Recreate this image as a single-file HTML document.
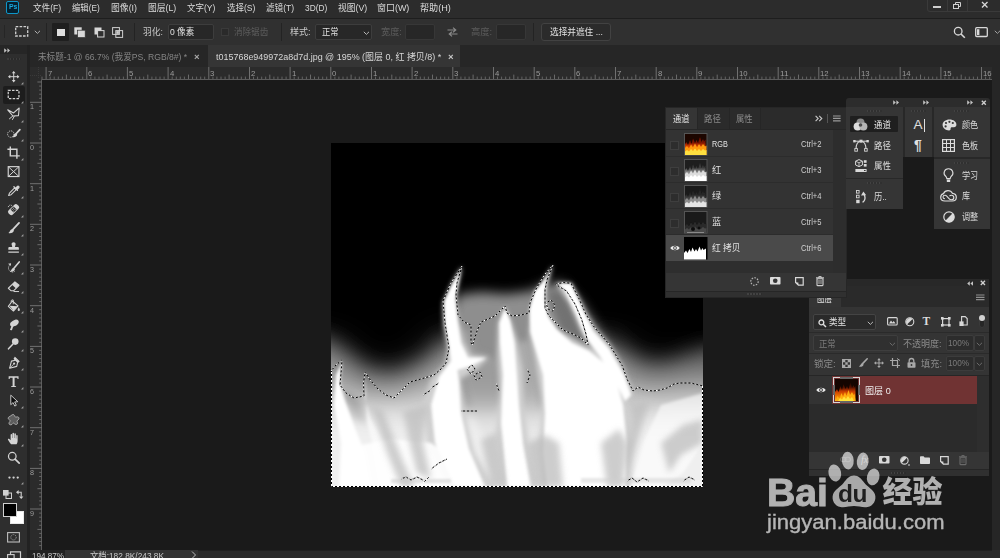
<!DOCTYPE html>
<html lang="zh-CN">
<head>
<meta charset="utf-8">
<title>Photoshop</title>
<style>
*{box-sizing:border-box;margin:0;padding:0}
html,body{width:1000px;height:558px;overflow:hidden;background:#1a1a1a}
body{position:relative;font-family:"Liberation Sans","Noto Sans CJK SC",sans-serif;font-size:9.5px;color:#d6d6d6;line-height:1}
.a{position:absolute}
.t{position:absolute;white-space:pre;line-height:1;transform-origin:0 50%}
svg{position:absolute;overflow:visible}
#menubar{left:0;top:0;width:1000px;height:18px;background:#2c2c2c}
#menusep{left:0;top:18px;width:1000px;height:1px;background:#1e1e1e}
#optbar{left:0;top:19px;width:1000px;height:26px;background:#303030}
#tabbar{left:0;top:45px;width:1000px;height:22px;background:#262626}
#toolbar{left:0;top:54px;width:27px;height:504px;background:#2e2e2e}
#gap{left:27px;top:45px;width:3px;height:513px;background:#222}
#hruler{left:30px;top:67px;width:962px;height:12px;background:#2b2b2b}
#vruler{left:30px;top:79px;width:12px;height:471px;background:#2b2b2b}
#vscroll{left:992px;top:67px;width:8px;height:491px;background:#262626}
#status{left:30px;top:550px;width:970px;height:8px;background:#2c2c2c}
.sep{position:absolute;top:23px;width:1px;height:18px;background:#232323}
.inp{position:absolute;background:#272727;border:1px solid #3d3d3d;border-radius:2px}
</style>
</head>
<body>
<!-- top bars -->
<div class="a" id="menubar"></div>
<div class="a" id="menusep"></div>
<div class="a" id="optbar"></div>
<div class="a" id="tabbar"></div>
<div class="a" style="left:208px;top:45px;width:252px;height:22px;background:#353535"></div>
<!-- Ps logo -->
<div class="a" style="left:6px;top:1px;width:13px;height:12.500px;border:1.300px solid #0e96c8;border-radius:2px;background:#06202e"></div>
<span class="t" style="left:8.800px;top:3.400px;font-size:7.500px;font-weight:bold;color:#1aa8dc;transform:scaleX(.92)">Ps</span>
<!-- window controls -->
<div class="a" style="left:927px;top:0;width:74px;height:12px;border:1px solid #3a3a3a;border-top:none;border-radius:0 0 0 3px;background:#2c2c2c"></div>
<div class="a" style="left:947px;top:0;width:1px;height:11px;background:#3a3a3a"></div>
<div class="a" style="left:967px;top:0;width:1px;height:11px;background:#3a3a3a"></div>
<div class="a" style="left:933px;top:6px;width:8px;height:2px;background:#cfcfcf"></div>
<svg style="left:952px;top:1px" width="12" height="9" viewBox="0 0 12 9"><rect x="1.5" y="3.5" width="5" height="4" fill="none" stroke="#cfcfcf" stroke-width="1"/><path d="M3.5 3.5v-2h5v4h-2" fill="none" stroke="#cfcfcf" stroke-width="1"/></svg>
<svg style="left:981px;top:1px" width="8" height="8" viewBox="0 0 8 8"><path d="M1 1l5.5 5.5M6.5 1L1 6.5" stroke="#d8d8d8" stroke-width="1.3" fill="none"/></svg>
<!-- options bar content -->
<div class="a" style="left:3.5px;top:25px;width:1.5px;height:13px;background:#262626"></div>
<svg style="left:15px;top:25.5px" width="14" height="11" viewBox="0 0 14 11"><rect x="0.7" y="0.7" width="12" height="9.3" fill="none" stroke="#d0d0d0" stroke-width="1.3" stroke-dasharray="2.6 1.3"/></svg>
<svg style="left:33.5px;top:30px" width="7" height="5" viewBox="0 0 7 5"><path d="M0.8 0.8L3.4 3.4 6 0.8" fill="none" stroke="#b0b0b0" stroke-width="1"/></svg>
<div class="sep" style="left:45.5px"></div>
<div class="a" style="left:52px;top:23px;width:17px;height:18px;background:#1f1f1f;border-radius:1px"></div>
<div class="a" style="left:57px;top:28.6px;width:7.6px;height:7.6px;background:#dedede"></div>
<svg style="left:73.5px;top:27px" width="12" height="11" viewBox="0 0 12 11"><rect x="0.3" y="0.3" width="7.4" height="7.2" fill="#d8d8d8"/><rect x="3.6" y="3.2" width="7.6" height="7.4" fill="#d8d8d8" stroke="#303030" stroke-width=".7"/></svg>
<svg style="left:93.5px;top:27px" width="12" height="11" viewBox="0 0 12 11"><rect x="0.5" y="0.5" width="7" height="7" fill="#d8d8d8"/><rect x="3.6" y="3.6" width="6.4" height="6.4" fill="#303030" stroke="#d8d8d8" stroke-width="1"/></svg>
<svg style="left:112px;top:27px" width="12" height="11" viewBox="0 0 12 11"><rect x="0.6" y="0.6" width="6.8" height="6.8" fill="none" stroke="#d0d0d0" stroke-width="1"/><rect x="3.8" y="3.6" width="6.8" height="6.8" fill="none" stroke="#d0d0d0" stroke-width="1"/><rect x="4.3" y="4.1" width="2.6" height="2.8" fill="#d0d0d0"/></svg>
<div class="sep" style="left:133.5px"></div>
<div class="inp" style="left:167.5px;top:24px;width:46px;height:15.5px"></div>
<div class="a" style="left:221px;top:28px;width:8px;height:8px;background:#2a2a2a;border:1px solid #3a3a3a"></div>
<div class="sep" style="left:281px"></div>
<div class="inp" style="left:314.5px;top:24px;width:57px;height:16px"></div>
<svg style="left:362.5px;top:30.5px" width="7" height="5" viewBox="0 0 7 5"><path d="M0.8 0.8L3.4 3.4 6 0.8" fill="none" stroke="#b8b8b8" stroke-width="1"/></svg>
<div class="inp" style="left:405px;top:24px;width:29.5px;height:15.5px;border-color:#373737"></div>
<svg style="left:446.5px;top:27px" width="11" height="10" viewBox="0 0 11 10"><path d="M0.5 3h8M6 0.6L8.8 3 6 5.2M10.5 7h-8M5 4.8L2.2 7 5 9.4" fill="none" stroke="#8a8a8a" stroke-width="1.1"/></svg>
<div class="inp" style="left:495.5px;top:24px;width:30px;height:15.5px;border-color:#373737"></div>
<div class="sep" style="left:532.5px"></div>
<div class="a" style="left:541px;top:23px;width:70px;height:17.5px;background:#2b2b2b;border:1px solid #424242;border-radius:3px"></div>
<svg style="left:953px;top:26px" width="13" height="13" viewBox="0 0 13 13"><circle cx="5.2" cy="5.2" r="3.8" fill="none" stroke="#d8d8d8" stroke-width="1.3"/><path d="M8 8l3.8 3.8" stroke="#d8d8d8" stroke-width="1.6"/></svg>
<svg style="left:975px;top:27px" width="14" height="11" viewBox="0 0 14 11"><rect x="0.7" y="0.7" width="11.6" height="8.8" rx="1" fill="none" stroke="#d8d8d8" stroke-width="1.3"/><rect x="2" y="2.2" width="2.4" height="5.8" fill="#d8d8d8"/></svg>
<svg style="left:993.5px;top:30px" width="7" height="5" viewBox="0 0 7 5"><path d="M0.8 0.8L3.4 3.4 6 0.8" fill="none" stroke="#a0a0a0" stroke-width="1"/></svg>
<!-- tab close marks -->
<svg style="left:194px;top:54px" width="6" height="6" viewBox="0 0 6 6"><path d="M0.8 0.8l4 4M4.8 0.8l-4 4" stroke="#a8a8a8" stroke-width="1.1"/></svg>
<svg style="left:447.5px;top:54px" width="6" height="6" viewBox="0 0 6 6"><path d="M0.8 0.8l4 4M4.8 0.8l-4 4" stroke="#c8c8c8" stroke-width="1.1"/></svg>

<span class="t" style="left:33.1px;top:3.0px;font-size:9.5px;color:#dadada;transform:scaleX(0.902)">文件(F)</span>
<span class="t" style="left:72.3px;top:3.0px;font-size:9.5px;color:#dadada;transform:scaleX(0.875)">编辑(E)</span>
<span class="t" style="left:111.0px;top:3.0px;font-size:9.5px;color:#dadada;transform:scaleX(0.930)">图像(I)</span>
<span class="t" style="left:148.0px;top:3.0px;font-size:9.5px;color:#dadada;transform:scaleX(0.924)">图层(L)</span>
<span class="t" style="left:186.7px;top:3.0px;font-size:9.5px;color:#dadada;transform:scaleX(0.894)">文字(Y)</span>
<span class="t" style="left:226.7px;top:3.0px;font-size:9.5px;color:#dadada;transform:scaleX(0.894)">选择(S)</span>
<span class="t" style="left:265.9px;top:3.0px;font-size:9.5px;color:#dadada;transform:scaleX(0.902)">滤镜(T)</span>
<span class="t" style="left:304.8px;top:3.0px;font-size:9.5px;color:#dadada;transform:scaleX(0.876)">3D(D)</span>
<span class="t" style="left:337.5px;top:3.0px;font-size:9.5px;color:#dadada;transform:scaleX(0.922)">视图(V)</span>
<span class="t" style="left:377.3px;top:3.0px;font-size:9.5px;color:#dadada;transform:scaleX(0.942)">窗口(W)</span>
<span class="t" style="left:420.0px;top:3.0px;font-size:9.5px;color:#dadada;transform:scaleX(0.956)">帮助(H)</span>
<span class="t" style="left:142.6px;top:27.1px;font-size:9.5px;color:#c8c8c8;transform:scaleX(0.915)">羽化:</span>
<span class="t" style="left:169.8px;top:27.1px;font-size:9.5px;color:#e0e0e0;transform:scaleX(0.898)">0 像素</span>
<span class="t" style="left:233.7px;top:27.2px;font-size:9.5px;color:#5c5c5c;transform:scaleX(0.900)">消除锯齿</span>
<span class="t" style="left:290.4px;top:27.1px;font-size:9.5px;color:#c8c8c8;transform:scaleX(0.952)">样式:</span>
<span class="t" style="left:321.5px;top:27.2px;font-size:9.5px;color:#e0e0e0;transform:scaleX(0.868)">正常</span>
<span class="t" style="left:380.7px;top:27.2px;font-size:9.5px;color:#5c5c5c;transform:scaleX(0.961)">宽度:</span>
<span class="t" style="left:471.3px;top:27.2px;font-size:9.5px;color:#5c5c5c;transform:scaleX(0.975)">高度:</span>
<span class="t" style="left:549.6px;top:27.2px;font-size:9.5px;color:#e0e0e0;transform:scaleX(0.911)">选择并遮住 ...</span>
<span class="t" style="left:37.5px;top:51.9px;font-size:9.5px;color:#858585;transform:scaleX(0.905)">未标题-1 @ 66.7% (我爱PS, RGB/8#) *</span>
<span class="t" style="left:215.7px;top:51.9px;font-size:9.5px;color:#d8d8d8;transform:scaleX(0.943)">t015768e949972a8d7d.jpg @ 195% (图层 0, 红 拷贝/8) *</span>
<!-- rulers -->
<div class="a" id="hruler"></div><div class="a" id="vruler"></div><div class="a" id="vscroll"></div><div class="a" id="status"></div>
<div class="a" id="toolbar"></div><div class="a" id="gap"></div>
<svg style="left:0;top:0" width="1000" height="558" viewBox="0 0 1000 558">
<path d="M41.5 79.5H992M41.5 79.5V550" stroke="#5c5c5c" stroke-width="1" fill="none"/>
<path d="M46.1 67v12M86.8 67v12M127.4 67v12M168.1 67v12M208.8 67v12M249.5 67v12M290.1 67v12M330.8 67v12M371.5 67v12M412.1 67v12M452.8 67v12M493.5 67v12M534.2 67v12M574.8 67v12M615.5 67v12M656.2 67v12M696.8 67v12M737.5 67v12M778.2 67v12M818.8 67v12M859.5 67v12M900.2 67v12M940.9 67v12M981.5 67v12M30 102.3h12M30 143.0h12M30 183.7h12M30 224.3h12M30 265.0h12M30 305.7h12M30 346.4h12M30 387.0h12M30 427.7h12M30 468.4h12M30 509.0h12" stroke="#707070" stroke-width="1" fill="none"/>
<path d="M66.4 74.6v4.4M107.1 74.6v4.4M147.8 74.6v4.4M188.5 74.6v4.4M229.1 74.6v4.4M269.8 74.6v4.4M310.5 74.6v4.4M351.1 74.6v4.4M391.8 74.6v4.4M432.5 74.6v4.4M473.1 74.6v4.4M513.8 74.6v4.4M554.5 74.6v4.4M595.2 74.6v4.4M635.8 74.6v4.4M676.5 74.6v4.4M717.2 74.6v4.4M757.8 74.6v4.4M798.5 74.6v4.4M839.2 74.6v4.4M879.8 74.6v4.4M920.5 74.6v4.4M961.2 74.6v4.4M37.4 82.0h4.4M37.4 122.7h4.4M37.4 163.3h4.4M37.4 204.0h4.4M37.4 244.7h4.4M37.4 285.3h4.4M37.4 326.0h4.4M37.4 366.7h4.4M37.4 407.4h4.4M37.4 448.0h4.4M37.4 488.7h4.4M37.4 529.4h4.4" stroke="#6a6a6a" stroke-width="1" fill="none"/>
<path d="M42.0 76.6v2.4M50.2 76.6v2.4M54.2 76.6v2.4M58.3 76.6v2.4M62.4 76.6v2.4M70.5 76.6v2.4M74.6 76.6v2.4M78.6 76.6v2.4M82.7 76.6v2.4M90.8 76.6v2.4M94.9 76.6v2.4M99.0 76.6v2.4M103.0 76.6v2.4M111.2 76.6v2.4M115.2 76.6v2.4M119.3 76.6v2.4M123.4 76.6v2.4M131.5 76.6v2.4M135.6 76.6v2.4M139.7 76.6v2.4M143.7 76.6v2.4M151.9 76.6v2.4M155.9 76.6v2.4M160.0 76.6v2.4M164.1 76.6v2.4M172.2 76.6v2.4M176.3 76.6v2.4M180.3 76.6v2.4M184.4 76.6v2.4M192.5 76.6v2.4M196.6 76.6v2.4M200.7 76.6v2.4M204.7 76.6v2.4M212.9 76.6v2.4M216.9 76.6v2.4M221.0 76.6v2.4M225.1 76.6v2.4M233.2 76.6v2.4M237.3 76.6v2.4M241.3 76.6v2.4M245.4 76.6v2.4M253.5 76.6v2.4M257.6 76.6v2.4M261.7 76.6v2.4M265.7 76.6v2.4M273.9 76.6v2.4M277.9 76.6v2.4M282.0 76.6v2.4M286.1 76.6v2.4M294.2 76.6v2.4M298.3 76.6v2.4M302.3 76.6v2.4M306.4 76.6v2.4M314.5 76.6v2.4M318.6 76.6v2.4M322.7 76.6v2.4M326.7 76.6v2.4M334.9 76.6v2.4M338.9 76.6v2.4M343.0 76.6v2.4M347.1 76.6v2.4M355.2 76.6v2.4M359.3 76.6v2.4M363.3 76.6v2.4M367.4 76.6v2.4M375.5 76.6v2.4M379.6 76.6v2.4M383.7 76.6v2.4M387.7 76.6v2.4M395.9 76.6v2.4M399.9 76.6v2.4M404.0 76.6v2.4M408.1 76.6v2.4M416.2 76.6v2.4M420.3 76.6v2.4M424.3 76.6v2.4M428.4 76.6v2.4M436.5 76.6v2.4M440.6 76.6v2.4M444.7 76.6v2.4M448.7 76.6v2.4M456.9 76.6v2.4M460.9 76.6v2.4M465.0 76.6v2.4M469.1 76.6v2.4M477.2 76.6v2.4M481.3 76.6v2.4M485.3 76.6v2.4M489.4 76.6v2.4M497.5 76.6v2.4M501.6 76.6v2.4M505.7 76.6v2.4M509.7 76.6v2.4M517.9 76.6v2.4M521.9 76.6v2.4M526.0 76.6v2.4M530.1 76.6v2.4M538.2 76.6v2.4M542.3 76.6v2.4M546.4 76.6v2.4M550.4 76.6v2.4M558.6 76.6v2.4M562.6 76.6v2.4M566.7 76.6v2.4M570.8 76.6v2.4M578.9 76.6v2.4M583.0 76.6v2.4M587.0 76.6v2.4M591.1 76.6v2.4M599.2 76.6v2.4M603.3 76.6v2.4M607.4 76.6v2.4M611.4 76.6v2.4M619.6 76.6v2.4M623.6 76.6v2.4M627.7 76.6v2.4M631.8 76.6v2.4M639.9 76.6v2.4M644.0 76.6v2.4M648.0 76.6v2.4M652.1 76.6v2.4M660.2 76.6v2.4M664.3 76.6v2.4M668.4 76.6v2.4M672.4 76.6v2.4M680.6 76.6v2.4M684.6 76.6v2.4M688.7 76.6v2.4M692.8 76.6v2.4M700.9 76.6v2.4M705.0 76.6v2.4M709.0 76.6v2.4M713.1 76.6v2.4M721.2 76.6v2.4M725.3 76.6v2.4M729.4 76.6v2.4M733.4 76.6v2.4M741.6 76.6v2.4M745.6 76.6v2.4M749.7 76.6v2.4M753.8 76.6v2.4M761.9 76.6v2.4M766.0 76.6v2.4M770.0 76.6v2.4M774.1 76.6v2.4M782.2 76.6v2.4M786.3 76.6v2.4M790.4 76.6v2.4M794.4 76.6v2.4M802.6 76.6v2.4M806.6 76.6v2.4M810.7 76.6v2.4M814.8 76.6v2.4M822.9 76.6v2.4M827.0 76.6v2.4M831.0 76.6v2.4M835.1 76.6v2.4M843.2 76.6v2.4M847.3 76.6v2.4M851.4 76.6v2.4M855.4 76.6v2.4M863.6 76.6v2.4M867.6 76.6v2.4M871.7 76.6v2.4M875.8 76.6v2.4M883.9 76.6v2.4M888.0 76.6v2.4M892.0 76.6v2.4M896.1 76.6v2.4M904.2 76.6v2.4M908.3 76.6v2.4M912.4 76.6v2.4M916.4 76.6v2.4M924.6 76.6v2.4M928.6 76.6v2.4M932.7 76.6v2.4M936.8 76.6v2.4M944.9 76.6v2.4M949.0 76.6v2.4M953.1 76.6v2.4M957.1 76.6v2.4M965.3 76.6v2.4M969.3 76.6v2.4M973.4 76.6v2.4M977.5 76.6v2.4M985.6 76.6v2.4M989.7 76.6v2.4M39.2 86.1h2.6M39.2 90.1h2.6M39.2 94.2h2.6M39.2 98.3h2.6M39.2 106.4h2.6M39.2 110.5h2.6M39.2 114.5h2.6M39.2 118.6h2.6M39.2 126.7h2.6M39.2 130.8h2.6M39.2 134.9h2.6M39.2 138.9h2.6M39.2 147.1h2.6M39.2 151.1h2.6M39.2 155.2h2.6M39.2 159.3h2.6M39.2 167.4h2.6M39.2 171.5h2.6M39.2 175.5h2.6M39.2 179.6h2.6M39.2 187.7h2.6M39.2 191.8h2.6M39.2 195.9h2.6M39.2 199.9h2.6M39.2 208.1h2.6M39.2 212.1h2.6M39.2 216.2h2.6M39.2 220.3h2.6M39.2 228.4h2.6M39.2 232.5h2.6M39.2 236.5h2.6M39.2 240.6h2.6M39.2 248.7h2.6M39.2 252.8h2.6M39.2 256.9h2.6M39.2 260.9h2.6M39.2 269.1h2.6M39.2 273.1h2.6M39.2 277.2h2.6M39.2 281.3h2.6M39.2 289.4h2.6M39.2 293.5h2.6M39.2 297.5h2.6M39.2 301.6h2.6M39.2 309.7h2.6M39.2 313.8h2.6M39.2 317.9h2.6M39.2 321.9h2.6M39.2 330.1h2.6M39.2 334.1h2.6M39.2 338.2h2.6M39.2 342.3h2.6M39.2 350.4h2.6M39.2 354.5h2.6M39.2 358.6h2.6M39.2 362.6h2.6M39.2 370.8h2.6M39.2 374.8h2.6M39.2 378.9h2.6M39.2 383.0h2.6M39.2 391.1h2.6M39.2 395.2h2.6M39.2 399.2h2.6M39.2 403.3h2.6M39.2 411.4h2.6M39.2 415.5h2.6M39.2 419.6h2.6M39.2 423.6h2.6M39.2 431.8h2.6M39.2 435.8h2.6M39.2 439.9h2.6M39.2 444.0h2.6M39.2 452.1h2.6M39.2 456.2h2.6M39.2 460.2h2.6M39.2 464.3h2.6M39.2 472.4h2.6M39.2 476.5h2.6M39.2 480.6h2.6M39.2 484.6h2.6M39.2 492.8h2.6M39.2 496.8h2.6M39.2 500.9h2.6M39.2 505.0h2.6M39.2 513.1h2.6M39.2 517.2h2.6M39.2 521.2h2.6M39.2 525.3h2.6M39.2 533.4h2.6M39.2 537.5h2.6M39.2 541.6h2.6M39.2 545.6h2.6" stroke="#646464" stroke-width="1" fill="none"/>
<path d="M30 75.5h11M38.5 67v12" stroke="#3a3a3a" stroke-width="1" stroke-dasharray="1 1" fill="none"/>
</svg>
<div class="a" style="left:30px;top:549.5px;width:962px;height:1px;background:#222"></div>
<div class="a" style="left:30px;top:550px;width:34.500px;height:8px;background:#222"></div>
<div class="a" style="left:64.500px;top:550px;width:133px;height:8px;background:#333"></div>
<svg style="left:191px;top:550.5px" width="6" height="7" viewBox="0 0 6 7"><path d="M1 0.5L4.5 4 1 7.5" fill="none" stroke="#bbb" stroke-width="1"/></svg>

<span class="t" style="left:31.6px;top:550.5px;font-size:9.5px;color:#c8c8c8;transform:scaleX(0.853)">194.87%</span>
<span class="t" style="left:90.0px;top:550.5px;font-size:9.5px;color:#c8c8c8;transform:scaleX(0.876)">文档:182.8K/243.8K</span>
<span class="t" style="left:47.7px;top:70.2px;font-size:8px;color:#9c9c9c;transform:scaleX(0.966)">7</span>
<span class="t" style="left:88.4px;top:70.2px;font-size:8px;color:#9c9c9c;transform:scaleX(0.966)">6</span>
<span class="t" style="left:129.0px;top:70.2px;font-size:8px;color:#9c9c9c;transform:scaleX(0.966)">5</span>
<span class="t" style="left:169.7px;top:70.2px;font-size:8px;color:#9c9c9c;transform:scaleX(0.966)">4</span>
<span class="t" style="left:210.4px;top:70.2px;font-size:8px;color:#9c9c9c;transform:scaleX(0.966)">3</span>
<span class="t" style="left:251.1px;top:70.2px;font-size:8px;color:#9c9c9c;transform:scaleX(0.966)">2</span>
<span class="t" style="left:291.7px;top:70.2px;font-size:8px;color:#9c9c9c;transform:scaleX(0.966)">1</span>
<span class="t" style="left:332.4px;top:70.2px;font-size:8px;color:#9c9c9c;transform:scaleX(0.966)">0</span>
<span class="t" style="left:373.1px;top:70.2px;font-size:8px;color:#9c9c9c;transform:scaleX(0.966)">1</span>
<span class="t" style="left:413.7px;top:70.2px;font-size:8px;color:#9c9c9c;transform:scaleX(0.966)">2</span>
<span class="t" style="left:454.4px;top:70.2px;font-size:8px;color:#9c9c9c;transform:scaleX(0.966)">3</span>
<span class="t" style="left:495.1px;top:70.2px;font-size:8px;color:#9c9c9c;transform:scaleX(0.966)">4</span>
<span class="t" style="left:535.8px;top:70.2px;font-size:8px;color:#9c9c9c;transform:scaleX(0.966)">5</span>
<span class="t" style="left:576.4px;top:70.2px;font-size:8px;color:#9c9c9c;transform:scaleX(0.966)">6</span>
<span class="t" style="left:617.1px;top:70.2px;font-size:8px;color:#9c9c9c;transform:scaleX(0.966)">7</span>
<span class="t" style="left:657.8px;top:70.2px;font-size:8px;color:#9c9c9c;transform:scaleX(0.966)">8</span>
<span class="t" style="left:698.4px;top:70.2px;font-size:8px;color:#9c9c9c;transform:scaleX(0.966)">9</span>
<span class="t" style="left:739.1px;top:70.2px;font-size:8px;color:#9c9c9c;transform:scaleX(0.966)">10</span>
<span class="t" style="left:779.8px;top:70.2px;font-size:8px;color:#9c9c9c;transform:scaleX(1.035)">11</span>
<span class="t" style="left:820.4px;top:70.2px;font-size:8px;color:#9c9c9c;transform:scaleX(0.966)">12</span>
<span class="t" style="left:861.1px;top:70.2px;font-size:8px;color:#9c9c9c;transform:scaleX(0.966)">13</span>
<span class="t" style="left:901.8px;top:70.2px;font-size:8px;color:#9c9c9c;transform:scaleX(0.966)">14</span>
<span class="t" style="left:942.5px;top:70.2px;font-size:8px;color:#9c9c9c;transform:scaleX(0.966)">15</span>
<span class="t" style="left:983.1px;top:70.2px;font-size:8px;color:#9c9c9c;transform:scaleX(0.966)">16</span>
<span class="t" style="left:30.4px;top:103.3px;font-size:8px;color:#9c9c9c;transform:scaleX(0.898)">1</span>
<span class="t" style="left:30.4px;top:144.0px;font-size:8px;color:#9c9c9c;transform:scaleX(0.898)">0</span>
<span class="t" style="left:30.4px;top:184.7px;font-size:8px;color:#9c9c9c;transform:scaleX(0.898)">1</span>
<span class="t" style="left:30.4px;top:225.3px;font-size:8px;color:#9c9c9c;transform:scaleX(0.898)">2</span>
<span class="t" style="left:30.4px;top:266.0px;font-size:8px;color:#9c9c9c;transform:scaleX(0.898)">3</span>
<span class="t" style="left:30.4px;top:306.7px;font-size:8px;color:#9c9c9c;transform:scaleX(0.898)">4</span>
<span class="t" style="left:30.4px;top:347.4px;font-size:8px;color:#9c9c9c;transform:scaleX(0.898)">5</span>
<span class="t" style="left:30.4px;top:388.0px;font-size:8px;color:#9c9c9c;transform:scaleX(0.898)">6</span>
<span class="t" style="left:30.4px;top:428.7px;font-size:8px;color:#9c9c9c;transform:scaleX(0.898)">7</span>
<span class="t" style="left:30.4px;top:469.4px;font-size:8px;color:#9c9c9c;transform:scaleX(0.898)">8</span>
<span class="t" style="left:30.4px;top:510.0px;font-size:8px;color:#9c9c9c;transform:scaleX(0.898)">9</span>
<!-- tools -->
<svg style="left:3.500px;top:47.500px" width="7" height="5" viewBox="0 0 7 5"><path d="M0.200 0.200L2.800 2.500 0.200 4.800zM3.400 0.200L6 2.500 3.400 4.800z" fill="#c4c4c4"/></svg>
<div class="a" style="left:6.500px;top:57.500px;width:14px;height:2px;background:repeating-linear-gradient(90deg,#3c3c3c 0 1.500px,#2a2a2a 1.500px 3px)"></div>
<div class="a" style="left:3px;top:85.500px;width:22px;height:18.500px;background:#1d1d1d;border-radius:2px"></div>
<svg style="left:7.6px;top:70.6px" width="11.4" height="11.4" viewBox="0 0 16 16"><path d="M8 1.2v13.6M1.2 8h13.6" stroke="#d4d4d4" stroke-width="1.4" fill="none"/><path d="M8 0l2.6 3.2H5.4zM8 16l2.6-3.2H5.4zM0 8l3.2-2.6v5.2zM16 8l-3.2-2.6v5.2z" fill="#d4d4d4"/></svg>
<svg style="left:20.800px;top:81.5px" width="2.400" height="2.400" viewBox="0 0 3 3"><path d="M3 0v3H0z" fill="#a0a0a0"/></svg>
<svg style="left:6.7px;top:87.8px" width="13.2" height="13.2" viewBox="0 0 16 16"><rect x="1.5" y="3" width="13" height="10" fill="none" stroke="#d4d4d4" stroke-width="1.5" stroke-dasharray="3 1.6"/></svg>
<svg style="left:20.800px;top:100.6px" width="2.400" height="2.400" viewBox="0 0 3 3"><path d="M3 0v3H0z" fill="#a0a0a0"/></svg>
<svg style="left:6.7px;top:107.3px" width="13.2" height="13.2" viewBox="0 0 16 16"><path d="M0.9 3.4L8 7.2 14.8 1.2 13.9 10.5 7.2 10.9z" fill="none" stroke="#d4d4d4" stroke-width="1.3" stroke-linejoin="round"/><path d="M7.2 10.9L2.6 14.6M9 11l-2.600 4.600" stroke="#d4d4d4" stroke-width="1.200" fill="none"/></svg>
<svg style="left:20.800px;top:119.7px" width="2.400" height="2.400" viewBox="0 0 3 3"><path d="M3 0v3H0z" fill="#a0a0a0"/></svg>
<svg style="left:6.7px;top:126.9px" width="13.2" height="13.2" viewBox="0 0 16 16"><circle cx="4.6" cy="8.6" r="3.9" fill="none" stroke="#d4d4d4" stroke-width="1.1" stroke-dasharray="1.5 1.1"/><path d="M15.600 3.200l-4.600 5" stroke="#d4d4d4" stroke-width="2.200" stroke-linecap="round"/><path d="M11.400 7.600c-1.800-.6-3 .8-3.400 2.400-.2 1-.8 1.600-1.600 2 2.400 1 5.400-.2 6-2.600z" fill="#d4d4d4"/></svg>
<svg style="left:20.800px;top:138.7px" width="2.400" height="2.400" viewBox="0 0 3 3"><path d="M3 0v3H0z" fill="#a0a0a0"/></svg>
<svg style="left:6.7px;top:146.0px" width="13.2" height="13.2" viewBox="0 0 16 16"><path d="M4 0.5v11.5h11.5M0.5 4h11.5v11.5" fill="none" stroke="#d4d4d4" stroke-width="1.7"/></svg>
<svg style="left:20.800px;top:157.8px" width="2.400" height="2.400" viewBox="0 0 3 3"><path d="M3 0v3H0z" fill="#a0a0a0"/></svg>
<svg style="left:6.7px;top:165.1px" width="13.2" height="13.2" viewBox="0 0 16 16"><rect x="1.5" y="2" width="13" height="12" fill="none" stroke="#d4d4d4" stroke-width="1.4"/><path d="M1.5 2l13 12M14.5 2l-13 12" stroke="#d4d4d4" stroke-width="1.2"/></svg>
<svg style="left:6.7px;top:184.2px" width="13.2" height="13.2" viewBox="0 0 16 16"><path d="M2 14l1-3 6.2-6.2 2 2L5 13z" fill="none" stroke="#d4d4d4" stroke-width="1.3" stroke-linejoin="round"/><path d="M8.4 3.4l4.2 4.2M10.4 5.6l2.2-2.6c1-1 2.6.4 1.6 1.6l-2.4 2.2z" fill="#d4d4d4" stroke="#d4d4d4" stroke-width="1.6" stroke-linecap="round"/></svg>
<svg style="left:20.800px;top:196.0px" width="2.400" height="2.400" viewBox="0 0 3 3"><path d="M3 0v3H0z" fill="#a0a0a0"/></svg>
<svg style="left:6.7px;top:203.3px" width="13.2" height="13.2" viewBox="0 0 16 16"><g transform="rotate(-45 8 8)"><rect x="0.5" y="4.4" width="15" height="7.2" rx="2.6" fill="#d4d4d4"/><rect x="5.4" y="5.4" width="5.2" height="5.2" fill="#2e2e2e"/><circle cx="6.8" cy="6.8" r=".6" fill="#d4d4d4"/><circle cx="9.2" cy="6.8" r=".6" fill="#d4d4d4"/><circle cx="6.8" cy="9.2" r=".6" fill="#d4d4d4"/><circle cx="9.2" cy="9.2" r=".6" fill="#d4d4d4"/></g><path d="M1.5 5c.5-3 4-3.4 5-1" fill="none" stroke="#d4d4d4" stroke-width="1" stroke-dasharray="1.4 1"/></svg>
<svg style="left:20.800px;top:215.1px" width="2.400" height="2.400" viewBox="0 0 3 3"><path d="M3 0v3H0z" fill="#a0a0a0"/></svg>
<svg style="left:6.7px;top:222.3px" width="13.2" height="13.2" viewBox="0 0 16 16"><path d="M14.6 1.2L7 9.2" stroke="#d4d4d4" stroke-width="2.2" stroke-linecap="round"/><path d="M6.6 8.6c-2.4 0-2.6 2.8-4.8 4.8 3 .8 6.4-.6 6.6-3z" fill="#d4d4d4"/></svg>
<svg style="left:20.800px;top:234.1px" width="2.400" height="2.400" viewBox="0 0 3 3"><path d="M3 0v3H0z" fill="#a0a0a0"/></svg>
<svg style="left:6.7px;top:241.4px" width="13.2" height="13.2" viewBox="0 0 16 16"><path d="M8 1.5c1.8 0 2.8 1.4 2.4 2.8L9.6 7.4h3.6c.8 0 1.2.4 1.2 1.2v2H1.6v-2c0-.8.4-1.2 1.2-1.2h3.6L5.6 4.3C5.2 2.9 6.2 1.500 8 1.500zM1.600 12.600h12.800v1.600H1.600z" fill="#d4d4d4"/></svg>
<svg style="left:20.800px;top:253.2px" width="2.400" height="2.400" viewBox="0 0 3 3"><path d="M3 0v3H0z" fill="#a0a0a0"/></svg>
<svg style="left:6.7px;top:260.5px" width="13.2" height="13.2" viewBox="0 0 16 16"><path d="M14.800 1.200L8.400 8.800" stroke="#d4d4d4" stroke-width="2" stroke-linecap="round"/><path d="M8 8.400c-2.200 0-2.400 2.600-4.400 4.400 2.800.8 5.800-.6 6-2.800z" fill="#d4d4d4"/><path d="M9.400 12.600a4.600 4.600 0 1 1-5.400-8.200" fill="none" stroke="#d4d4d4" stroke-width="1" stroke-dasharray="1.400 1"/><path d="M1.400 3.200l3.600-.4-.6 3.400z" fill="#d4d4d4"/></svg>
<svg style="left:20.800px;top:272.3px" width="2.400" height="2.400" viewBox="0 0 3 3"><path d="M3 0v3H0z" fill="#a0a0a0"/></svg>
<svg style="left:6.7px;top:279.6px" width="13.2" height="13.2" viewBox="0 0 16 16"><path d="M9.600 2.200l5 4.200-6.400 6.600H4.800L1.600 10z" fill="none" stroke="#d4d4d4" stroke-width="1.300" stroke-linejoin="round"/><path d="M9.600 2.200l5 4.200-3.600 3.800-5-4.300z" fill="#d4d4d4"/><path d="M8 14h6.600" stroke="#d4d4d4" stroke-width="1.200"/></svg>
<svg style="left:20.800px;top:291.4px" width="2.400" height="2.400" viewBox="0 0 3 3"><path d="M3 0v3H0z" fill="#a0a0a0"/></svg>
<svg style="left:6.7px;top:298.7px" width="13.2" height="13.2" viewBox="0 0 16 16"><path d="M6.400 2.400l7 6-5.600 6.200L1.600 9z" fill="none" stroke="#d4d4d4" stroke-width="1.300" stroke-linejoin="round"/><path d="M3 8.200l9.800.600-5 5.400z" fill="#d4d4d4"/><path d="M7.600 6.400V1.200c-1.800-.8-3 .8-2.600 2.200" fill="none" stroke="#d4d4d4" stroke-width="1.100"/><path d="M14.200 10c.8 1.400 1.400 2.400 1.400 3.200a1.300 1.300 0 0 1-2.600 0c0-.8.600-1.800 1.200-3.200z" fill="#d4d4d4"/></svg>
<svg style="left:20.800px;top:310.5px" width="2.400" height="2.400" viewBox="0 0 3 3"><path d="M3 0v3H0z" fill="#a0a0a0"/></svg>
<svg style="left:6.7px;top:317.7px" width="13.2" height="13.2" viewBox="0 0 16 16"><path d="M3.600 14.600l1.600-4.200C3 8.800 3.200 5.600 5.600 4.400c1.600-.8 3-2.200 5-2.600 2.400-.4 4.200 1.400 3.600 3.600-.6 2.200-2.600 4-5 4.400L7.400 10.600 6 14.800z" fill="#d4d4d4"/></svg>
<svg style="left:20.800px;top:329.5px" width="2.400" height="2.400" viewBox="0 0 3 3"><path d="M3 0v3H0z" fill="#a0a0a0"/></svg>
<svg style="left:6.7px;top:336.8px" width="13.2" height="13.2" viewBox="0 0 16 16"><circle cx="10" cy="5.600" r="4" fill="#d4d4d4"/><path d="M7 8.800L1.800 14.400" stroke="#d4d4d4" stroke-width="1.800" stroke-linecap="round"/></svg>
<svg style="left:20.800px;top:348.6px" width="2.400" height="2.400" viewBox="0 0 3 3"><path d="M3 0v3H0z" fill="#a0a0a0"/></svg>
<svg style="left:6.7px;top:355.9px" width="13.2" height="13.2" viewBox="0 0 16 16"><path d="M9.600 1.600l5 5-1.800 1.400-1 4.600-8.600 2.200 2.200-8.600 4.600-1z" fill="none" stroke="#d4d4d4" stroke-width="1.300" stroke-linejoin="round"/><path d="M3.400 14.600l4.600-4.600" stroke="#d4d4d4" stroke-width="1"/><circle cx="8.600" cy="9.200" r="1.300" fill="#d4d4d4"/><path d="M8.600 2.600l5 5" stroke="#d4d4d4" stroke-width="2.200"/></svg>
<svg style="left:20.800px;top:367.7px" width="2.400" height="2.400" viewBox="0 0 3 3"><path d="M3 0v3H0z" fill="#a0a0a0"/></svg>
<svg style="left:6.7px;top:375.0px" width="13.2" height="13.2" viewBox="0 0 16 16"><path d="M2 1.600h12v3.200h-1.200l-.4-1.600H9.200v10l1.800.4v1H5v-1l1.800-.4v-10H3.600l-.4 1.600H2z" fill="#d4d4d4"/></svg>
<svg style="left:20.800px;top:386.8px" width="2.400" height="2.400" viewBox="0 0 3 3"><path d="M3 0v3H0z" fill="#a0a0a0"/></svg>
<svg style="left:6.7px;top:394.1px" width="13.2" height="13.2" viewBox="0 0 16 16"><path d="M4.600 1.400v11.600l2.800-2.600 2 4.200 1.900-.9-2-4.100 3.800-.2z" fill="#0c0c0c" stroke="#d4d4d4" stroke-width="1.100" stroke-linejoin="round"/></svg>
<svg style="left:20.800px;top:405.9px" width="2.400" height="2.400" viewBox="0 0 3 3"><path d="M3 0v3H0z" fill="#a0a0a0"/></svg>
<svg style="left:6.7px;top:413.1px" width="13.2" height="13.2" viewBox="0 0 16 16"><path d="M6.200 2.200c1.600-1 3.200.2 3.400 2 .1.800.8 1 1.600.7 2-.8 3.900.4 3.300 2.300-.4 1.400-2 1.400-2.300 2.400-.3 1.200 1.300 2.200.3 3.600-1 1.300-2.900.6-3.700-.4-.7-.8-1.400-.7-2 .2-.9 1.400-3.100 2-4.100.5-.9-1.400.4-2.500 1-3.500.5-.8 0-1.300-.8-1.700C1.200 7.500.9 5.400 2.500 4.700c1.300-.5 2.700-1.900 3.700-2.500z" fill="#5e5e5e" stroke="#b8b8b8" stroke-width="1"/></svg>
<svg style="left:20.800px;top:424.9px" width="2.400" height="2.400" viewBox="0 0 3 3"><path d="M3 0v3H0z" fill="#a0a0a0"/></svg>
<svg style="left:6.7px;top:432.2px" width="13.2" height="13.2" viewBox="0 0 16 16"><path d="M5 15c-1.400-1.800-3-4-3.800-5.600-.5-1 .8-1.800 1.600-.9L4.400 10V3.400c0-1.300 1.800-1.300 1.800 0V7.400h.4V1.800c0-1.300 1.900-1.300 1.900 0v5.600h.4V2.600c0-1.300 1.900-1.300 1.900 0v5.200h.4V4.600c0-1.200 1.700-1.200 1.700 0v6c0 1.800-.6 3-1.300 4.400z" fill="#d4d4d4"/></svg>
<svg style="left:20.800px;top:444.0px" width="2.400" height="2.400" viewBox="0 0 3 3"><path d="M3 0v3H0z" fill="#a0a0a0"/></svg>
<svg style="left:6.7px;top:451.3px" width="13.2" height="13.2" viewBox="0 0 16 16"><circle cx="6.400" cy="6.400" r="4.600" fill="none" stroke="#d4d4d4" stroke-width="1.500"/><path d="M9.800 9.800l5 5" stroke="#d4d4d4" stroke-width="2" stroke-linecap="round"/></svg>
<svg style="left:6.7px;top:470.8px" width="13.2" height="13.2" viewBox="0 0 16 16"><circle cx="3" cy="8" r="1.400" fill="#d4d4d4"/><circle cx="8" cy="8" r="1.400" fill="#d4d4d4"/><circle cx="13" cy="8" r="1.400" fill="#d4d4d4"/></svg>
<svg style="left:20.800px;top:482.2px" width="2.400" height="2.400" viewBox="0 0 3 3"><path d="M3 0v3H0z" fill="#a0a0a0"/></svg>
<svg style="left:3px;top:490px" width="9" height="9" viewBox="0 0 9 9"><rect x="3" y="3" width="5.500" height="5.500" fill="none" stroke="#d0d0d0" stroke-width="1"/><rect x="0" y="0" width="5.600" height="5.600" fill="#d0d0d0"/></svg>
<svg style="left:15.500px;top:490px" width="8" height="9" viewBox="0 0 8 9"><path d="M2 2.200h3.200v4.600" fill="none" stroke="#d0d0d0" stroke-width="1.100"/><path d="M0 2.200L2.600 0v4.400zM5.200 9L3 6.400h4.400z" fill="#d0d0d0"/></svg>
<div class="a" style="left:10px;top:510.500px;width:14px;height:13.500px;background:#fff;border:1px solid #e8e8e8"></div>
<div class="a" style="left:2.800px;top:503px;width:14px;height:13.500px;background:#000;border:1px solid #cfcfcf"></div>
<svg style="left:7px;top:531.500px" width="13" height="11" viewBox="0 0 13 11"><rect x="0.600" y="0.600" width="11.800" height="9.400" fill="none" stroke="#bdbdbd" stroke-width="1.100"/><circle cx="6.500" cy="5.300" r="2.700" fill="none" stroke="#9a9a9a" stroke-width="1" stroke-dasharray="1.200 .800"/></svg>
<svg style="left:7px;top:551px" width="14" height="8" viewBox="0 0 14 8"><path d="M3.500 7.500v-6.600h10v6.600" fill="none" stroke="#cfcfcf" stroke-width="1.200"/><rect x="0.600" y="3.600" width="6.500" height="5" fill="#2e2e2e" stroke="#cfcfcf" stroke-width="1.100"/></svg>
<!-- image -->
<svg style="left:331px;top:143px" width="372" height="344" viewBox="0 0 372 344">
<defs>
<clipPath id="ic"><rect x="0" y="0" width="372" height="344"/></clipPath>
<filter id="b20" x="-40%" y="-40%" width="180%" height="180%"><feGaussianBlur stdDeviation="20"/></filter>
<filter id="b15" x="-40%" y="-40%" width="180%" height="180%"><feGaussianBlur stdDeviation="15"/></filter>
<filter id="b8" x="-40%" y="-40%" width="180%" height="180%"><feGaussianBlur stdDeviation="8"/></filter>
<filter id="b10" x="-40%" y="-40%" width="180%" height="180%"><feGaussianBlur stdDeviation="10"/></filter>
<filter id="b6" x="-40%" y="-40%" width="180%" height="180%"><feGaussianBlur stdDeviation="6"/></filter>
<filter id="b3" x="-40%" y="-40%" width="180%" height="180%"><feGaussianBlur stdDeviation="3"/></filter>
<filter id="b25" x="-40%" y="-40%" width="180%" height="180%"><feGaussianBlur stdDeviation="2.5"/></filter>
<filter id="b2" x="-40%" y="-40%" width="180%" height="180%"><feGaussianBlur stdDeviation="1.6"/></filter>
<filter id="b1" x="-40%" y="-40%" width="180%" height="180%"><feGaussianBlur stdDeviation="1"/></filter>
</defs>
<rect width="372" height="344" fill="#000"/>
<g clip-path="url(#ic)">
<path d="M-40.0 192.0 L0.0 197.0 L36.0 226.0 L64.0 231.0 L97.0 216.0 L114.0 192.0 L124.0 205.0 L135.0 215.0 L280.0 216.0 L274.0 186.0 L293.0 208.0 L315.0 220.0 L336.0 220.0 L358.0 211.0 L372.0 205.0 L412.0 202.0 L412.0 420.0 L-40.0 420.0 Z" fill="#545454" filter="url(#b10)"/>
<path d="M-60.0 207.0 L0.0 214.0 L22.0 241.0 L63.0 247.0 L103.0 227.0 L116.0 209.0 L124.0 200.0 L135.0 212.0 L200.0 214.0 L285.0 214.0 L296.0 232.0 L302.0 240.0 L322.0 242.0 L349.0 234.0 L372.0 235.0 L432.0 232.0 L432.0 420.0 L-60.0 420.0 Z" fill="#c8c8c8" filter="url(#b20)"/>
<path d="M120.0 166.0 L127.0 152.0 L150.0 149.0 L175.0 151.0 L200.0 148.0 L214.0 141.0 L232.0 140.0 L250.0 160.0 L270.0 190.0 L292.0 224.0 L296.0 270.0 L116.0 270.0 Z" fill="#8e8e8e" filter="url(#b6)"/>
<g filter="url(#b3)">
<path d="M216 150 L230 186 L256 203 L246 170 L230 147 Z" fill="#727272"/>
<path d="M12 246 L30 258 L36 282 L22 276 Z" fill="#8c8c8c"/>
<path d="M130 184 L140 188 L144 208 L166 216 L168 262 L164 300 L150 290 L138 256 L128 226 Z" fill="#a2a2a2" opacity=".7"/>
<path d="M186 200 L198 196 L206 230 L210 290 L206 330 L196 300 L192 250 Z" fill="#b0b0b0" opacity=".8"/>
<path d="M292 232 L300 252 L322 256 L312 290 L300 320 L296 280 Z" fill="#b8b8b8" opacity=".5"/>
</g>
<rect x="-40" y="266" width="452" height="140" fill="#fff" opacity=".72" filter="url(#b15)"/>
<g filter="url(#b25)" fill="#d0d0d0">
<path d="M131 123 L120 142 L112 160 L113 182 L117 205 L114 222 L100 236 L92 262 L96 300 L118 344 L164 344 L144 310 L136 280 L132 250 L130 236 L146 226 L158 214 L140 212 L133 198 L127 172 L125 152 Z"/>
<path d="M174 164 L167 180 L166 210 L168 250 L164 290 L170 344 L208 344 L198 300 L194 262 L192 225 L186 196 L180 178 Z"/>
<path d="M222 122 L210 142 L200 165 L198 190 L204 220 L210 260 L208 300 L212 344 L300 344 L302 300 L298 262 L292 240 L282 222 L264 208 L242 196 L226 186 L216 170 L214 150 Z"/>
<path d="M225 141 L240 140 L249 157 L256 172 L264 185 L279 202 L292 224 L302 250 L294 262 L282 236 L266 212 L250 188 L238 160 Z"/>
</g>
<g filter="url(#b2)" fill="#fff">
<path d="M130.500 124 L121 142 L113.500 158 L114 180 L118 202 L120 218 L108 234 L100 262 L104 300 L124 344 L154 344 L138 306 L130 270 L128 240 L126.500 227 L140 223 L155 215 L137 214.500 L130 200 L126.500 178 L124.200 156 Z"/>
<path d="M174 165 L168.500 180 L169 200 L172 232 L170 280 L176 344 L200 344 L192 300 L188 262 L186 232 L183.500 200 L179 178 Z"/>
<path d="M222 122.500 L211 140 L203.500 148 L198.500 167 L199.500 189 L206 211 L212 232 L214 270 L212 310 L216 344 L294 344 L296 300 L292 262 L286 240 L276 222 L258 208 L241 200 L226 187 L217 174 L213.500 156 L215.500 138 Z"/>
<path d="M226 140.500 L240 140.500 L251 165 L262 188 L278 206 L293 232 L300 252 L294 258 L284 238 L268 212 L254 193 L245 171 L233 146 Z"/>
<path d="M11 218 L5 232 L3 262 L10 300 L8 344 L40 344 L34 310 L22 280 L14 258 L9 240 Z"/>
<path d="M34 230 L33 252 L40 276 L56 304 L70 330 L78 344 L50 344 L44 310 L36 280 Z" opacity=".6"/>
<path d="M20 304 L60 296 L100 300 L130 320 L140 344 L10 344 Z" opacity=".9"/>
<path d="M330 262 L372 250 L372 300 L352 330 L330 344 L300 344 L312 300 Z" opacity=".6"/>
</g>
<g filter="url(#b3)" fill="#bdbdbd" opacity=".75">
<path d="M40 262 L52 268 L72 318 L84 344 L70 344 L56 310 Z"/>
<path d="M72 268 L96 262 L92 300 L100 336 L86 330 L78 298 Z"/>
<path d="M196 300 L214 292 L228 300 L232 344 L204 344 Z"/>
<path d="M270 300 L288 286 L296 300 L292 344 L276 344 Z"/>
<path d="M300 262 L318 258 L306 300 L296 330 Z"/>
<path d="M150 296 L166 290 L174 344 L160 344 Z"/>
<path d="M330 300 L352 282 L372 276 L372 300 L350 312 L338 330 Z"/>
</g>
<rect x="60" y="336" width="60" height="4" fill="#c8c8c8" opacity=".5" filter="url(#b1)"/>
<rect x="250" y="335" width="110" height="5" fill="#d0d0d0" opacity=".5" filter="url(#b1)"/>
</g>
<path d="M0.0 228.0 L5.0 222.0 L11.0 217.0 L10.0 230.0 L9.0 242.0 L15.0 250.0 L23.0 255.0 L33.0 253.0 L32.5 240.0 L34.0 229.0 L40.0 238.0 L47.0 246.0 L55.0 252.0 L63.0 255.0 L70.0 248.0 L79.0 239.0 L90.0 236.0 L103.0 232.0 L110.0 226.0 L115.0 220.0 L118.0 205.0 L114.0 180.0 L112.0 158.0 L120.0 140.0 L131.0 123.0 L126.0 140.0 L125.0 152.0 L127.0 172.0 L133.0 179.0 L140.0 182.0 L140.0 200.0 L141.5 202.0 L146.0 188.0 L150.0 179.0 L157.0 176.0 L164.0 173.0 L170.0 167.0 L174.0 163.0 L176.0 170.0 L181.0 173.0 L190.0 172.0 L198.0 170.0 L199.0 160.0 L206.0 144.0 L214.0 131.0 L222.0 122.0 L216.0 137.0 L214.0 147.0 L214.0 165.0 L218.0 173.0 L232.0 187.0 L242.0 191.0 L250.0 195.0 L257.0 202.0 L255.0 191.0 L250.5 176.0 L244.0 161.0 L235.5 148.0 L224.7 141.4 L232.0 139.5 L240.0 140.3 L248.4 156.5 L255.0 171.5 L263.4 184.4 L278.5 201.6 L291.4 223.0 L296.0 236.0 L302.0 248.0 L307.0 244.0 L313.0 247.0 L322.0 248.0 L329.0 247.0 L336.0 245.0 L343.0 241.0 L349.0 240.0 L360.0 240.0 L372.0 243.0 M371.500 243 L371.500 343.500 L0.500 343.500 L0.500 228" fill="none" stroke="#000" stroke-width="1"/>
<path d="M0.0 228.0 L5.0 222.0 L11.0 217.0 L10.0 230.0 L9.0 242.0 L15.0 250.0 L23.0 255.0 L33.0 253.0 L32.5 240.0 L34.0 229.0 L40.0 238.0 L47.0 246.0 L55.0 252.0 L63.0 255.0 L70.0 248.0 L79.0 239.0 L90.0 236.0 L103.0 232.0 L110.0 226.0 L115.0 220.0 L118.0 205.0 L114.0 180.0 L112.0 158.0 L120.0 140.0 L131.0 123.0 L126.0 140.0 L125.0 152.0 L127.0 172.0 L133.0 179.0 L140.0 182.0 L140.0 200.0 L141.5 202.0 L146.0 188.0 L150.0 179.0 L157.0 176.0 L164.0 173.0 L170.0 167.0 L174.0 163.0 L176.0 170.0 L181.0 173.0 L190.0 172.0 L198.0 170.0 L199.0 160.0 L206.0 144.0 L214.0 131.0 L222.0 122.0 L216.0 137.0 L214.0 147.0 L214.0 165.0 L218.0 173.0 L232.0 187.0 L242.0 191.0 L250.0 195.0 L257.0 202.0 L255.0 191.0 L250.5 176.0 L244.0 161.0 L235.5 148.0 L224.7 141.4 L232.0 139.5 L240.0 140.3 L248.4 156.5 L255.0 171.5 L263.4 184.4 L278.5 201.6 L291.4 223.0 L296.0 236.0 L302.0 248.0 L307.0 244.0 L313.0 247.0 L322.0 248.0 L329.0 247.0 L336.0 245.0 L343.0 241.0 L349.0 240.0 L360.0 240.0 L372.0 243.0 M371.500 243 L371.500 343.500 L0.500 343.500 L0.500 228" fill="none" stroke="#fff" stroke-width="1" stroke-dasharray="2 2"/>
<path d="M136 226 l5 -4 l3 4 l-4 5z M143 232 l6 -3 l2 5 l-6 3z M215 160 l5 -3 l4 5 l-2 6 l-5 -2z M100 245 l8 -5 M92 252 l8 -5 M130 268 l16 0 M70 336 l5 -2 l5 3 l6 -3 l6 3 M100 326 l8 -6 l8 -4 M92 340 l6 -6 M296 338 l5 -3 l5 4 l6 -4 l6 3 M352 338 l6 -4 l6 3 M196 226 l3 6 l-3 8 M165 240 l3 8" fill="none" stroke="#000" stroke-width="1"/>
<path d="M136 226 l5 -4 l3 4 l-4 5z M143 232 l6 -3 l2 5 l-6 3z M215 160 l5 -3 l4 5 l-2 6 l-5 -2z M100 245 l8 -5 M92 252 l8 -5 M130 268 l16 0 M70 336 l5 -2 l5 3 l6 -3 l6 3 M100 326 l8 -6 l8 -4 M92 340 l6 -6 M296 338 l5 -3 l5 4 l6 -4 l6 3 M352 338 l6 -4 l6 3 M196 226 l3 6 l-3 8 M165 240 l3 8" fill="none" stroke="#fff" stroke-width="1" stroke-dasharray="2 2"/>
</svg>
<!-- layers panel -->
<div class="a" style="left:809px;top:279px;width:179.500px;height:196.500px;background:#2b2b2b"></div>
<div class="a" style="left:809px;top:279px;width:179.500px;height:7px;background:#282828"></div>
<div class="a" style="left:809px;top:286px;width:179.500px;height:21px;background:#2a2a2a"></div>
<div class="a" style="left:809px;top:286px;width:31.500px;height:21px;background:#353535"></div>
<div class="a" style="left:809px;top:307px;width:179.500px;height:68px;background:#343434"></div>
<div class="a" style="left:809px;top:331.500px;width:179.500px;height:1px;background:#2a2a2a"></div>
<div class="a" style="left:809px;top:352.500px;width:179.500px;height:1px;background:#2a2a2a"></div>
<div class="a" style="left:809px;top:374.500px;width:179.500px;height:1px;background:#262626"></div>
<div class="a" style="left:809px;top:375.500px;width:23px;height:28.500px;background:#333"></div>
<div class="a" style="left:831.700px;top:375.500px;width:145.500px;height:28.500px;background:#703333"></div>
<div class="a" style="left:977px;top:375.500px;width:11.500px;height:76px;background:#2e2e2e"></div>
<div class="a" style="left:809px;top:451.500px;width:179.500px;height:17px;background:#353535"></div>
<div class="a" style="left:809px;top:468.500px;width:179.500px;height:1px;background:#262626"></div>
<div class="a" style="left:809px;top:469.500px;width:179.500px;height:6px;background:#303030"></div>
<div class="a" style="left:891px;top:471.500px;width:15px;height:2px;background:repeating-linear-gradient(90deg,#424242 0 1.500px,#2c2c2c 1.500px 3px)"></div>
<!-- header icons -->
<svg style="left:966.500px;top:280.500px" width="7" height="5" viewBox="0 0 7 5"><path d="M2.800 0.200L0.200 2.500 2.800 4.800zM6 0.200L3.400 2.500 6 4.800z" fill="#c4c4c4"/></svg>
<svg style="left:979.500px;top:280px" width="6" height="6" viewBox="0 0 6 6"><path d="M0.800 0.800l4.200 4.200M5 0.800L0.800 5" stroke="#d0d0d0" stroke-width="1.300"/></svg>
<svg style="left:976px;top:293.500px" width="9" height="7" viewBox="0 0 9 7"><path d="M0 1h8.500M0 3.300h8.500M0 5.600h8.500" stroke="#8e8e8e" stroke-width="1.200"/></svg>
<!-- filter row -->
<div class="inp" style="left:812.500px;top:314px;width:63px;height:15.500px;background:#2a2a2a;border-color:#444"></div>
<svg style="left:817.500px;top:318.500px" width="9" height="9" viewBox="0 0 9 9"><circle cx="3.400" cy="3.400" r="2.400" fill="none" stroke="#e0e0e0" stroke-width="1.300"/><path d="M5.200 5.200l2.800 2.800" stroke="#e0e0e0" stroke-width="1.500"/></svg>
<svg style="left:866.500px;top:320.500px" width="7" height="5" viewBox="0 0 7 5"><path d="M0.800 0.800L3.400 3.400 6 0.800" fill="none" stroke="#b8b8b8" stroke-width="1"/></svg>
<svg style="left:886.500px;top:316.500px" width="11" height="9" viewBox="0 0 11 9"><rect x="0.600" y="0.600" width="9.600" height="7.400" rx="1" fill="none" stroke="#d8d8d8" stroke-width="1.100"/><path d="M2 6.500l2-3 1.500 2 1.200-1.400L8.600 6.500z" fill="#d8d8d8"/></svg>
<svg style="left:905px;top:316.500px" width="10" height="10" viewBox="0 0 10 10"><circle cx="4.800" cy="4.800" r="4" fill="none" stroke="#d8d8d8" stroke-width="1.100"/><path d="M2 7.600A4 4 0 0 1 7.600 2z" fill="#d8d8d8"/></svg>
<span class="t" style="left:922.500px;top:316.300px;font-size:11.500px;font-weight:bold;color:#dcdcdc;font-family:'Liberation Serif',serif">T</span>
<svg style="left:940.500px;top:316.500px" width="10" height="10" viewBox="0 0 10 10"><rect x="1.600" y="1.600" width="6.400" height="6.400" fill="none" stroke="#d8d8d8" stroke-width="1.200"/><rect x="0" y="0" width="2.600" height="2.600" fill="#d8d8d8"/><rect x="7" y="0" width="2.600" height="2.600" fill="#d8d8d8"/><rect x="0" y="7" width="2.600" height="2.600" fill="#d8d8d8"/><rect x="7" y="7" width="2.600" height="2.600" fill="#d8d8d8"/></svg>
<svg style="left:959px;top:316px" width="9" height="11" viewBox="0 0 9 11"><path d="M2.600 0.600h3.600l2 2v6.400h-5.600z" fill="none" stroke="#d8d8d8" stroke-width="1.100"/><rect x="0.400" y="5.400" width="4.200" height="4.600" fill="#d8d8d8"/></svg>
<div class="a" style="left:978.500px;top:315px;width:6.500px;height:12.500px;border-radius:3.500px;background:#262626;border:1px solid #3a3a3a"></div>
<div class="a" style="left:979px;top:314.500px;width:6px;height:6px;border-radius:3px;background:#d2d2d2"></div>
<!-- blend row -->
<div class="inp" style="left:812.500px;top:335px;width:85.500px;height:15.500px;background:#303030;border-color:#3e3e3e"></div>
<svg style="left:889px;top:341.500px" width="7" height="5" viewBox="0 0 7 5"><path d="M0.800 0.800L3.400 3.400 6 0.800" fill="none" stroke="#6a6a6a" stroke-width="1"/></svg>
<div class="inp" style="left:945.500px;top:335px;width:28px;height:15.500px;background:#2c2c2c;border-color:#3c3c3c"></div>
<div class="inp" style="left:974px;top:335px;width:11px;height:15.500px;background:#2c2c2c;border-color:#3c3c3c"></div>
<svg style="left:976.200px;top:341.500px" width="7" height="5" viewBox="0 0 7 5"><path d="M0.800 0.800L3.400 3.400 6 0.800" fill="none" stroke="#6a6a6a" stroke-width="1"/></svg>
<!-- lock row -->
<svg style="left:841.500px;top:358.500px" width="9" height="9" viewBox="0 0 9 9"><rect x="0.500" y="0.500" width="8" height="8" fill="none" stroke="#a8a8a8" stroke-width="1"/><path d="M1 1h2.300v2.300H1zM5.700 1H8v2.300H5.700zM3.300 3.300h2.400v2.400H3.300zM1 5.700h2.300V8H1zM5.700 5.700H8V8H5.700z" fill="#a8a8a8"/></svg>
<svg style="left:858px;top:358px" width="10" height="10" viewBox="0 0 10 10"><path d="M9.200 0.800L4.600 5.600" stroke="#a8a8a8" stroke-width="1.600" stroke-linecap="round"/><path d="M4.400 5.200c-1.600 0-1.800 2-3.400 3.400 2 .6 4.400-.4 4.600-2.200z" fill="#a8a8a8"/></svg>
<svg style="left:873.500px;top:358px" width="10" height="10" viewBox="0 0 16 16"><path d="M8 1.500v13M1.500 8h13" stroke="#a8a8a8" stroke-width="1.600" fill="none"/><path d="M8 0l2.800 3.400H5.200zM8 16l2.800-3.400H5.200zM0 8l3.400-2.800v5.600zM16 8l-3.400-2.800v5.600z" fill="#a8a8a8"/></svg>
<svg style="left:889.500px;top:358px" width="11" height="10" viewBox="0 0 11 10"><path d="M2.500 0v7.500H10M0 2.500h7.500V10" fill="none" stroke="#a8a8a8" stroke-width="1.200"/><path d="M7 0.500l3 2" stroke="#a8a8a8" stroke-width="1"/></svg>
<svg style="left:906.500px;top:358px" width="9" height="10" viewBox="0 0 9 10"><rect x="0.500" y="4.200" width="8" height="5.600" rx=".8" fill="#a8a8a8"/><path d="M2.200 4.400V2.800a2.300 2.300 0 0 1 4.600 0v1.600" fill="none" stroke="#a8a8a8" stroke-width="1.300"/><circle cx="4.500" cy="7" r=".9" fill="#333"/></svg>
<div class="inp" style="left:945.500px;top:355.500px;width:28px;height:15.500px;background:#2c2c2c;border-color:#3c3c3c"></div>
<div class="inp" style="left:974px;top:355.500px;width:11px;height:15.500px;background:#2c2c2c;border-color:#3c3c3c"></div>
<svg style="left:976.200px;top:362px" width="7" height="5" viewBox="0 0 7 5"><path d="M0.800 0.800L3.400 3.400 6 0.800" fill="none" stroke="#6a6a6a" stroke-width="1"/></svg>
<!-- layer row -->
<svg style="left:815.500px;top:386px" width="10" height="8" viewBox="0 0 10 8"><path d="M0.300 4C2 1 8 1 9.700 4 8 7 2 7 0.300 4z" fill="#e8e8e8"/><circle cx="5" cy="4" r="1.900" fill="#333"/><circle cx="5" cy="4" r=".9" fill="#e8e8e8"/></svg>
<svg style="left:833px;top:377px" width="27" height="26" viewBox="0 0 27 26">
<defs><linearGradient id="fl1" x1="0" y1="0" x2="0" y2="1"><stop offset="0" stop-color="#120400"/><stop offset=".3" stop-color="#5a1400"/><stop offset=".5" stop-color="#c83c00"/><stop offset=".75" stop-color="#f07800"/><stop offset="1" stop-color="#ffc21a"/></linearGradient></defs>
<rect x="0.500" y="0.500" width="26" height="25" fill="none" stroke="#d8d8d8" stroke-width="1"/>
<rect x="2" y="2" width="23" height="22" fill="#140500"/>
<path d="M2 24V15l2-3 1.500 3 2-6 1.500 4 1.500-6 2 5 1.500-3 1.500 3 2-7 1.500 6 1.500-3 1 2.500 1-1.500V24z" fill="url(#fl1)"/>
<path d="M3 24l1.500-5 2 3 2-6 1.500 4 2-5 1.500 4 2-6 1.500 5 2-3 1.500 3 1-1 1 7z" fill="#ffae10"/><path d="M5 24l2-3 2 1.500 2-3 2 2.500 2-3 2 3 2-2 2 4z" fill="#ffe23a"/>
<rect x="7" y="0" width="13" height="2" fill="#666"/><rect x="7" y="24" width="13" height="2" fill="#666"/><rect x="0" y="8" width="2" height="10" fill="#666"/><rect x="25" y="8" width="2" height="10" fill="#666"/>
</svg>
<!-- bottom icons -->
<svg style="left:840px;top:456px" width="11" height="7" viewBox="0 0 11 7"><rect x="0.600" y="1.200" width="5.400" height="4.400" rx="2.200" fill="none" stroke="#5e5e5e" stroke-width="1.100"/><rect x="5" y="1.200" width="5.400" height="4.400" rx="2.200" fill="none" stroke="#5e5e5e" stroke-width="1.100"/></svg>
<span class="t" style="left:861px;top:454.500px;font-size:10px;font-style:italic;color:#9a9a9a;font-family:'Liberation Serif',serif">fx</span>
<svg style="left:879px;top:455.500px" width="11" height="8" viewBox="0 0 11 8"><rect x="0" y="0" width="10.500" height="7.600" rx=".8" fill="#d8d8d8"/><circle cx="5.250" cy="3.800" r="2.300" fill="#353535"/></svg>
<svg style="left:900px;top:455.500px" width="10" height="10" viewBox="0 0 10 10"><circle cx="4.400" cy="4.400" r="3.700" fill="none" stroke="#d8d8d8" stroke-width="1.100"/><path d="M1.800 7A3.700 3.700 0 0 1 7 1.800z" fill="#d8d8d8"/><rect x="8.300" y="8.300" width="1.400" height="1.400" fill="#d8d8d8"/></svg>
<svg style="left:919.500px;top:455.500px" width="10" height="8" viewBox="0 0 10 8"><path d="M0 1.200C0 .6.400.2 1 .2h2.600l1 1.200H9c.6 0 1 .4 1 1V7c0 .6-.4 1-1 1H1c-.6 0-1-.4-1-1z" fill="#d8d8d8"/></svg>
<svg style="left:939.500px;top:455.500px" width="9" height="9" viewBox="0 0 9 9"><path d="M0.600 0.600h7.600v7.600H3.400L0.600 5.400z" fill="none" stroke="#d8d8d8" stroke-width="1.200"/><path d="M0.600 5.400h2.800v2.800z" fill="#d8d8d8"/></svg>
<svg style="left:959px;top:455px" width="8" height="10" viewBox="0 0 8 10"><path d="M0 1.800h8M2.800 1.800V.6h2.400v1.200" fill="none" stroke="#6a6a6a" stroke-width="1"/><path d="M1 2.800h6v6.200c0 .4-.2.600-.6.600H1.600c-.4 0-.6-.2-.6-.6z" fill="none" stroke="#6a6a6a" stroke-width="1.100"/><path d="M3 4v4M5 4v4" stroke="#6a6a6a" stroke-width=".8"/></svg>

<span class="t" style="left:817.0px;top:294.2px;font-size:9.5px;color:#e0e0e0;transform:scaleX(0.789)">图层</span>
<span class="t" style="left:829.0px;top:317.4px;font-size:9.5px;color:#e0e0e0;transform:scaleX(0.905)">类型</span>
<span class="t" style="left:819.0px;top:338.6px;font-size:9.5px;color:#7a7a7a;transform:scaleX(0.878)">正常</span>
<span class="t" style="left:903.4px;top:338.6px;font-size:9.5px;color:#8a8a8a;transform:scaleX(0.950)">不透明度:</span>
<span class="t" style="left:948.0px;top:338.8px;font-size:9px;color:#7a7a7a;transform:scaleX(0.912)">100%</span>
<span class="t" style="left:814.0px;top:358.6px;font-size:9.5px;color:#8a8a8a;transform:scaleX(1.003)">锁定:</span>
<span class="t" style="left:921.0px;top:358.6px;font-size:9.5px;color:#8a8a8a;transform:scaleX(0.970)">填充:</span>
<span class="t" style="left:948.0px;top:358.8px;font-size:9px;color:#7a7a7a;transform:scaleX(0.912)">100%</span>
<span class="t" style="left:864.7px;top:385.8px;font-size:9.5px;color:#f0f0f0;transform:scaleX(0.954)">图层 0</span>
<!-- channels panel -->
<div class="a" style="left:665.5px;top:107.5px;width:180px;height:189px;background:#353535;box-shadow:0 0 0 1px #262626"></div>
<div class="a" style="left:665.5px;top:107.5px;width:180px;height:21px;background:#2b2b2b"></div>
<div class="a" style="left:665.5px;top:107.5px;width:31.5px;height:21px;background:#353535"></div>
<div class="a" style="left:697px;top:107.5px;width:1px;height:21px;background:#262626"></div>
<div class="a" style="left:729px;top:107.5px;width:1px;height:21px;background:#262626"></div>
<div class="a" style="left:760px;top:107.5px;width:1px;height:21px;background:#262626"></div>
<div class="a" style="left:665.5px;top:128.5px;width:180px;height:1.5px;background:#262626"></div>
<div class="a" style="left:665.5px;top:130px;width:167.5px;height:143px;background:#333"></div>
<div class="a" style="left:833px;top:130px;width:12.5px;height:143px;background:#2d2d2d"></div>
<div class="a" style="left:665.5px;top:155.5px;width:167.5px;height:1px;background:#2c2c2c"></div>
<div class="a" style="left:665.5px;top:181.5px;width:167.5px;height:1px;background:#2c2c2c"></div>
<div class="a" style="left:665.5px;top:207.5px;width:167.5px;height:1px;background:#2c2c2c"></div>
<div class="a" style="left:665.5px;top:233.5px;width:167.5px;height:1px;background:#2c2c2c"></div>
<div class="a" style="left:665.5px;top:234.5px;width:167.5px;height:26px;background:#4a4a4a"></div>
<div class="a" style="left:665.5px;top:260.5px;width:167.5px;height:12.5px;background:#2e2e2e"></div>
<div class="a" style="left:665.5px;top:273px;width:180px;height:17.5px;background:#353535"></div>
<div class="a" style="left:665.5px;top:290.5px;width:180px;height:1px;background:#262626"></div>
<div class="a" style="left:665.5px;top:291.5px;width:180px;height:5px;background:#303030"></div>
<div class="a" style="left:747px;top:293px;width:15px;height:2px;background:repeating-linear-gradient(90deg,#424242 0 1.500px,#2c2c2c 1.500px 3px)"></div>
<svg style="left:814.500px;top:115px" width="8" height="7" viewBox="0 0 8 7"><path d="M0.600 0.800L3.200 3.500 0.600 6.200M4.200 0.800L6.800 3.500 4.200 6.200" fill="none" stroke="#c8c8c8" stroke-width="1.100"/></svg>
<div class="a" style="left:827px;top:113.5px;width:1px;height:9.5px;background:#555"></div>
<svg style="left:832.500px;top:114.500px" width="8" height="7" viewBox="0 0 8 7"><path d="M0 1h7.600M0 3.400h7.600M0 5.800h7.600" stroke="#9a9a9a" stroke-width="1.200"/></svg>
<div class="a" style="left:670px;top:140.8px;width:9px;height:9px;background:#2d2d2d;border:1px solid #3e3e3e"></div>
<svg style="left:684px;top:133.3px" width="23.500" height="22.500" viewBox="0 0 23.500 22.500"><defs><filter id="tbrgb" x="-10%" y="-10%" width="120%" height="120%"><feGaussianBlur stdDeviation=".55"/></filter><linearGradient id="tgrgb" x1="0" y1="0" x2="0" y2="1"><stop offset=".3" stop-color="#7a1200"/><stop offset=".55" stop-color="#e04800"/><stop offset=".8" stop-color="#ff8c00"/><stop offset="1" stop-color="#ffc020"/></linearGradient></defs><rect x="0.500" y="0.500" width="22.500" height="21.500" fill="#1c0600" stroke="#555"/><g filter="url(#tbrgb)"><path d="M1 22V11l1.500-2 1.500 3 2-5 1.500 4 1.500-5.500 2 4.500 1.500-3 1.500 3 2-6 1.500 5 1.500-3 1 2.500 1.500-2V22z" fill="url(#tgrgb)"/><path d="M1 22V15l2-2 2 2.500 2-4 2 3 2-4 2 4 2-3.500 2 3 2-3 2 2.500 1.500-1V22z" fill="#ff9a10"/><path d="M1 22V18.500l2-1.500 2 1.500 2-2.500 2 2 2-2.500 2 2.500 2-2 2 2 2-2 2 1.500 1.500-.5V22z" fill="#ffe040"/></g></svg>
<div class="a" style="left:670px;top:166.8px;width:9px;height:9px;background:#2d2d2d;border:1px solid #3e3e3e"></div>
<svg style="left:684px;top:159.3px" width="23.500" height="22.500" viewBox="0 0 23.500 22.500"><defs><filter id="tbred" x="-10%" y="-10%" width="120%" height="120%"><feGaussianBlur stdDeviation=".55"/></filter><linearGradient id="tgred" x1="0" y1="0" x2="0" y2="1"><stop offset=".25" stop-color="#3a3a3a"/><stop offset=".6" stop-color="#a0a0a0"/><stop offset="1" stop-color="#e0e0e0"/></linearGradient></defs><rect x="0.500" y="0.500" width="22.500" height="21.500" fill="#1e1e1e" stroke="#555"/><g filter="url(#tbred)"><path d="M1 22V11l1.500-2 1.500 3 2-5 1.500 4 1.500-5.500 2 4.500 1.500-3 1.500 3 2-6 1.500 5 1.500-3 1 2.500 1.500-2V22z" fill="url(#tgred)"/><path d="M1 22V15l2-2 2 2.500 2-4 2 3 2-4 2 4 2-3.500 2 3 2-3 2 2.500 1.500-1V22z" fill="#dcdcdc"/><path d="M1 22V18.500l2-1.500 2 1.500 2-2.500 2 2 2-2.500 2 2.500 2-2 2 2 2-2 2 1.500 1.500-.5V22z" fill="#fff"/></g></svg>
<div class="a" style="left:670px;top:192.8px;width:9px;height:9px;background:#2d2d2d;border:1px solid #3e3e3e"></div>
<svg style="left:684px;top:185.3px" width="23.500" height="22.500" viewBox="0 0 23.500 22.500"><defs><filter id="tbgreen" x="-10%" y="-10%" width="120%" height="120%"><feGaussianBlur stdDeviation=".55"/></filter><linearGradient id="tggreen" x1="0" y1="0" x2="0" y2="1"><stop offset=".3" stop-color="#262626"/><stop offset=".7" stop-color="#5a5a5a"/><stop offset="1" stop-color="#8a8a8a"/></linearGradient></defs><rect x="0.500" y="0.500" width="22.500" height="21.500" fill="#1a1a1a" stroke="#555"/><g filter="url(#tbgreen)"><path d="M1 22V11l1.500-2 1.500 3 2-5 1.500 4 1.500-5.500 2 4.500 1.500-3 1.500 3 2-6 1.500 5 1.500-3 1 2.500 1.500-2V22z" fill="url(#tggreen)"/><path d="M1 22V15l2-2 2 2.500 2-4 2 3 2-4 2 4 2-3.500 2 3 2-3 2 2.500 1.500-1V22z" fill="#8c8c8c"/><path d="M1 22V18.500l2-1.500 2 1.500 2-2.500 2 2 2-2.500 2 2.500 2-2 2 2 2-2 2 1.500 1.500-.5V22z" fill="#e4e4e4"/></g></svg>
<div class="a" style="left:670px;top:218.8px;width:9px;height:9px;background:#2d2d2d;border:1px solid #3e3e3e"></div>
<svg style="left:684px;top:211.3px" width="23.500" height="22.500" viewBox="0 0 23.500 22.500"><defs><filter id="tbblue" x="-10%" y="-10%" width="120%" height="120%"><feGaussianBlur stdDeviation=".55"/></filter></defs><rect x="0.500" y="0.500" width="22.500" height="21.500" fill="#1a1a1a" stroke="#555"/><g filter="url(#tbblue)"><path d="M1 22V15l2-2 2 2.500 2-4 2 3 2-4 2 4 2-3.500 2 3 2-3 2 2.500 1.500-1V22z" fill="#2c2c2c"/><path d="M1 22V18.500l2-1.500 2 1.500 2-2.500 2 2 2-2.500 2 2.500 2-2 2 2 2-2 2 1.500 1.500-.5V22z" fill="#484848"/><circle cx="9" cy="18" r="2" fill="#101010"/><circle cx="15" cy="17" r="1.600" fill="#101010"/><path d="M3 21.500h17" stroke="#8a8a8a" stroke-width="1"/></g></svg>
<svg style="left:669.500px;top:243.5px" width="10" height="8" viewBox="0 0 10 8"><path d="M0.300 4C2 1 8 1 9.700 4 8 7 2 7 0.300 4z" fill="#ececec"/><circle cx="5" cy="4" r="1.900" fill="#4a4a4a"/><circle cx="5" cy="4" r=".9" fill="#ececec"/></svg>
<svg style="left:684px;top:237.3px" width="23.500" height="22.500" viewBox="0 0 23.500 22.500"><defs><filter id="tbcopy" x="-10%" y="-10%" width="120%" height="120%"><feGaussianBlur stdDeviation=".55"/></filter></defs><rect x="0" y="0" width="23.500" height="22.500" fill="#000"/><g filter="url(#tbcopy)"><path d="M0 22.500V16l2-2.500 1.500 2.500 2-4 1.500 3 1.500-4.500 2 4 1.500-2.500 1.500 2.500 2-5 1.500 4 1.500-2.500 1 2 2.500-1.500V22.500z" fill="#fff"/></g></svg>
<svg style="left:749.500px;top:276.500px" width="9" height="9" viewBox="0 0 9 9"><circle cx="4.500" cy="4.500" r="3.700" fill="none" stroke="#bdbdbd" stroke-width="1.100" stroke-dasharray="1.600 1.200"/></svg>
<svg style="left:770px;top:277px" width="11" height="8" viewBox="0 0 11 8"><rect x="0" y="0" width="10.500" height="7.600" rx=".8" fill="#dcdcdc"/><circle cx="5.250" cy="3.800" r="2.300" fill="#353535"/></svg>
<svg style="left:794.500px;top:277px" width="9" height="9" viewBox="0 0 9 9"><path d="M0.600 0.600h7.600v7.600H3.400L0.600 5.400z" fill="none" stroke="#d8d8d8" stroke-width="1.200"/><path d="M0.600 5.400h2.800v2.800z" fill="#d8d8d8"/></svg>
<svg style="left:816px;top:276px" width="8" height="10" viewBox="0 0 8 10"><path d="M0 1.800h8M2.800 1.800V.6h2.400v1.200" fill="none" stroke="#d0d0d0" stroke-width="1"/><path d="M1 2.800h6v6.200c0 .4-.2.600-.6.600H1.600c-.4 0-.6-.2-.6-.6z" fill="none" stroke="#d0d0d0" stroke-width="1.100"/><path d="M3 4v4M5 4v4" stroke="#d0d0d0" stroke-width=".8"/></svg>

<span class="t" style="left:673.3px;top:113.7px;font-size:9.5px;color:#e6e6e6;transform:scaleX(0.862)">通道</span>
<span class="t" style="left:704.0px;top:113.7px;font-size:9.5px;color:#8a8a8a;transform:scaleX(0.883)">路径</span>
<span class="t" style="left:735.6px;top:113.7px;font-size:9.5px;color:#8a8a8a;transform:scaleX(0.873)">属性</span>
<span class="t" style="left:711.7px;top:139.2px;font-size:9.5px;color:#e2e2e2;transform:scaleX(0.767)">RGB</span>
<span class="t" style="left:801.0px;top:139.5px;font-size:9px;color:#d0d0d0;transform:scaleX(0.845)">Ctrl+2</span>
<span class="t" style="left:711.7px;top:165.2px;font-size:9.5px;color:#e2e2e2;transform:scaleX(0.967)">红</span>
<span class="t" style="left:801.0px;top:165.5px;font-size:9px;color:#d0d0d0;transform:scaleX(0.845)">Ctrl+3</span>
<span class="t" style="left:711.7px;top:191.2px;font-size:9.5px;color:#e2e2e2;transform:scaleX(0.967)">绿</span>
<span class="t" style="left:801.0px;top:191.5px;font-size:9px;color:#d0d0d0;transform:scaleX(0.845)">Ctrl+4</span>
<span class="t" style="left:711.7px;top:217.2px;font-size:9.5px;color:#e2e2e2;transform:scaleX(0.967)">蓝</span>
<span class="t" style="left:801.0px;top:217.5px;font-size:9px;color:#d0d0d0;transform:scaleX(0.845)">Ctrl+5</span>
<span class="t" style="left:711.7px;top:243.2px;font-size:9.5px;color:#e2e2e2;transform:scaleX(0.915)">红 拷贝</span>
<span class="t" style="left:801.0px;top:243.5px;font-size:9px;color:#d0d0d0;transform:scaleX(0.845)">Ctrl+6</span>
<!-- dock -->
<div class="a" style="left:846px;top:97.500px;width:144px;height:10px;background:#2c2c2c;border-radius:3px 3px 0 0"></div>
<div class="a" style="left:846px;top:107px;width:56.500px;height:71px;background:#353535"></div>
<div class="a" style="left:846px;top:179px;width:56.500px;height:29.500px;background:#353535"></div>
<div class="a" style="left:904.500px;top:107px;width:27.500px;height:50px;background:#353535"></div>
<div class="a" style="left:934px;top:107px;width:56px;height:50px;background:#353535"></div>
<div class="a" style="left:934px;top:158.500px;width:56px;height:70px;background:#353535"></div>
<div class="a" style="left:850px;top:116px;width:48px;height:16px;background:#1f1f1f;border-radius:1px"></div>
<div class="a" style="left:902.500px;top:107px;width:2px;height:50px;background:#282828"></div>
<div class="a" style="left:932px;top:107px;width:2px;height:50px;background:#282828"></div>
<div class="a" style="left:934px;top:157px;width:56px;height:1.500px;background:#282828"></div>
<div class="a" style="left:846px;top:178px;width:56.500px;height:1px;background:#282828"></div>
<!-- grips -->
<div class="a" style="left:866.500px;top:110px;width:15px;height:2px;background:repeating-linear-gradient(90deg,#424242 0 1.500px,#303030 1.500px 3px)"></div>
<div class="a" style="left:866.500px;top:181.500px;width:15px;height:2px;background:repeating-linear-gradient(90deg,#424242 0 1.500px,#303030 1.500px 3px)"></div>
<div class="a" style="left:911px;top:110px;width:15px;height:2px;background:repeating-linear-gradient(90deg,#424242 0 1.500px,#303030 1.500px 3px)"></div>
<div class="a" style="left:954px;top:110px;width:15px;height:2px;background:repeating-linear-gradient(90deg,#424242 0 1.500px,#303030 1.500px 3px)"></div>
<div class="a" style="left:954px;top:161.500px;width:15px;height:2px;background:repeating-linear-gradient(90deg,#424242 0 1.500px,#303030 1.500px 3px)"></div>
<!-- header arrows -->
<svg style="left:893px;top:100px" width="7" height="5" viewBox="0 0 7 5"><path d="M0.200 0.200L2.800 2.500 0.200 4.800zM3.400 0.200L6 2.500 3.400 4.800z" fill="#c4c4c4"/></svg>
<svg style="left:922.500px;top:100px" width="7" height="5" viewBox="0 0 7 5"><path d="M0.200 0.200L2.800 2.500 0.200 4.800zM3.400 0.200L6 2.500 3.400 4.800z" fill="#c4c4c4"/></svg>
<svg style="left:967px;top:100px" width="7" height="5" viewBox="0 0 7 5"><path d="M0.200 0.200L2.800 2.500 0.200 4.800zM3.400 0.200L6 2.500 3.400 4.800z" fill="#c4c4c4"/></svg>
<svg style="left:981px;top:100px" width="6" height="6" viewBox="0 0 6 6"><path d="M0.800 0.800l4 4M4.800 0.800l-4 4" stroke="#d0d0d0" stroke-width="1.300"/></svg>
<!-- col 1 icons -->
<svg style="left:853px;top:117.500px" width="15" height="13" viewBox="0 0 15 13"><circle cx="7.500" cy="4.600" r="4" fill="#8a8a8a"/><circle cx="4.600" cy="8.400" r="4" fill="#dcdcdc"/><circle cx="10.400" cy="8.400" r="4" fill="#b4b4b4"/><circle cx="7.500" cy="7" r="1.800" fill="#4a4a4a"/></svg>
<svg style="left:852.500px;top:139px" width="16" height="13" viewBox="0 0 16 13"><path d="M3 10.500C3 5 5 2.200 8 2.200S13 5 13 10.500" fill="none" stroke="#d8d8d8" stroke-width="1.100"/><path d="M1.500 2.200h13" stroke="#d8d8d8" stroke-width="1"/><rect x="6.500" y="0.700" width="3" height="3" fill="#d8d8d8"/><rect x="0.200" y="1" width="2.400" height="2.400" fill="#d8d8d8"/><rect x="13.400" y="1" width="2.400" height="2.400" fill="#d8d8d8"/><rect x="1.800" y="9.600" width="2.600" height="2.600" fill="#353535" stroke="#d8d8d8" stroke-width=".9"/><rect x="11.600" y="9.600" width="2.600" height="2.600" fill="#353535" stroke="#d8d8d8" stroke-width=".9"/></svg>
<svg style="left:854.500px;top:158.500px" width="12" height="14" viewBox="0 0 12 14"><path d="M4 0.600l3.400 1.600v3.800L4 7.600 0.600 6V2.200z" fill="none" stroke="#d8d8d8" stroke-width="1"/><path d="M0.600 2.200L4 3.800l3.400-1.600M4 3.800v3.800" fill="none" stroke="#d8d8d8" stroke-width=".8"/><rect x="8.800" y="1.200" width="2.800" height="2.600" fill="#d8d8d8"/><rect x="8.800" y="5" width="2.800" height="2.600" fill="#d8d8d8"/><rect x="0.400" y="10" width="11.200" height="3" fill="#d8d8d8"/><rect x="9" y="11" width="1.600" height="1" fill="#353535"/></svg>
<svg style="left:855.500px;top:189.500px" width="11" height="14" viewBox="0 0 11 14"><rect x="0.500" y="0.500" width="2.600" height="2.600" fill="none" stroke="#d8d8d8" stroke-width=".9"/><rect x="0.500" y="5.200" width="2.600" height="2.600" fill="none" stroke="#d8d8d8" stroke-width=".9"/><rect x="0.200" y="9.800" width="3.400" height="3.400" fill="#d8d8d8"/><path d="M6.600 12.400c2.400-1.600 3-4.800 1.400-8.400" fill="none" stroke="#d8d8d8" stroke-width="1.300"/><path d="M5 5.600L7.400 1.600l2.800 3.600z" fill="#d8d8d8"/></svg>
<!-- col 2 icons -->
<span class="t" style="left:913.500px;top:118px;font-size:13.500px;color:#e0e0e0">A</span>
<div class="a" style="left:923.800px;top:119px;width:1.200px;height:12.500px;background:#e0e0e0"></div>
<span class="t" style="left:914px;top:137.500px;font-size:14px;color:#e0e0e0;font-weight:bold">¶</span>
<!-- col 3 icons -->
<svg style="left:941.500px;top:118.500px" width="15" height="12" viewBox="0 0 15 12"><path d="M7.500 0.600C3.600 0.600 0.600 3 0.600 6s3 5.400 6.400 5.400c1.400 0 1.800-.8 1.600-1.600-.2-1 .4-1.600 1.400-1.600h2c1.400 0 2.400-1 2.400-2.400C14.400 2.800 11.400 0.600 7.500 0.600z" fill="#dcdcdc"/><circle cx="4" cy="4" r="1.100" fill="#353535"/><circle cx="7.400" cy="2.800" r="1.100" fill="#353535"/><circle cx="10.800" cy="4" r="1.100" fill="#353535"/><circle cx="3.600" cy="7.400" r="1.100" fill="#353535"/></svg>
<svg style="left:941.500px;top:139px" width="13" height="13" viewBox="0 0 13 13"><rect x="0.600" y="0.600" width="11.800" height="11.800" fill="none" stroke="#dcdcdc" stroke-width="1.200"/><path d="M4.500 0.600v11.800M8.500 0.600v11.800M0.600 4.500h11.800M0.600 8.500h11.800" stroke="#dcdcdc" stroke-width="1"/></svg>
<svg style="left:942.500px;top:167.500px" width="11" height="15" viewBox="0 0 11 15"><path d="M5.500 0.700a4.300 4.300 0 0 0-2.600 7.800c.6.600.9 1.300.9 2.100h3.400c0-.8.300-1.500.9-2.100A4.300 4.300 0 0 0 5.500.7z" fill="none" stroke="#dcdcdc" stroke-width="1.100"/><rect x="3.800" y="11.400" width="3.400" height="2.600" rx=".6" fill="#dcdcdc"/></svg>
<svg style="left:940px;top:190px" width="17" height="12" viewBox="0 0 17 12"><path d="M4.800 11C2.400 11 0.700 9.300 0.700 7.200c0-1.800 1.200-3.200 2.900-3.600C4.300 1.900 6 .7 8 .7c2 0 3.600 1 4.400 2.600 2.200.2 3.900 1.800 3.900 3.900 0 2.100-1.700 3.800-4 3.800z" fill="none" stroke="#dcdcdc" stroke-width="1.200"/><path d="M5 8.800c-1.200 0-2-.8-2-1.800s.8-1.800 2-1.800c.8 0 1.400.4 2 1.100l2 2.400c.6.700 1.400 1.100 2.400 1.100 1.400 0 2.400-1 2.400-2.300 0-1.300-1-2.300-2.400-2.300-.8 0-1.400.3-1.900.8" fill="none" stroke="#dcdcdc" stroke-width="1.100"/></svg>
<svg style="left:942.500px;top:211px" width="12" height="12" viewBox="0 0 12 12"><circle cx="6" cy="6" r="5.200" fill="none" stroke="#dcdcdc" stroke-width="1.200"/><path d="M2.300 9.700A5.200 5.200 0 0 0 9.700 2.300z" fill="#dcdcdc"/></svg>

<span class="t" style="left:873.9px;top:120.2px;font-size:9.5px;color:#e6e6e6;transform:scaleX(0.889)">通道</span>
<span class="t" style="left:873.9px;top:140.8px;font-size:9.5px;color:#dcdcdc;transform:scaleX(0.889)">路径</span>
<span class="t" style="left:873.9px;top:161.1px;font-size:9.5px;color:#dcdcdc;transform:scaleX(0.889)">属性</span>
<span class="t" style="left:873.9px;top:191.8px;font-size:9.5px;color:#dcdcdc;transform:scaleX(0.873)">历..</span>
<span class="t" style="left:961.8px;top:120.2px;font-size:9.5px;color:#dcdcdc;transform:scaleX(0.852)">颜色</span>
<span class="t" style="left:961.8px;top:140.8px;font-size:9.5px;color:#dcdcdc;transform:scaleX(0.852)">色板</span>
<span class="t" style="left:961.8px;top:170.8px;font-size:9.5px;color:#dcdcdc;transform:scaleX(0.852)">学习</span>
<span class="t" style="left:961.8px;top:191.4px;font-size:9.5px;color:#dcdcdc;transform:scaleX(0.841)">库</span>
<span class="t" style="left:961.8px;top:212.2px;font-size:9.5px;color:#dcdcdc;transform:scaleX(0.852)">调整</span>
<!-- watermark -->
<svg style="left:826px;top:450px" width="56" height="60" viewBox="826 450 56 60">
<g fill="#fff" opacity=".62">
<ellipse cx="834.800" cy="473" rx="6.300" ry="8.600" transform="rotate(-12 834.800 473)"/>
<ellipse cx="847.800" cy="460.600" rx="5.900" ry="8.800" transform="rotate(-4 847.800 460.600)"/>
<ellipse cx="862.700" cy="461.300" rx="5.900" ry="8.800" transform="rotate(6 862.700 461.300)"/>
<ellipse cx="873.200" cy="476.900" rx="6.200" ry="8.500" transform="rotate(14 873.200 476.900)"/>
<path fill-rule="evenodd" d="M854 475.500c4.500 0 7.500 3.500 10.500 7.500 3 4 9 6.500 10.500 11.500 1.600 5.500-1.500 11.500-7.500 12.500-4.500.8-9-1-13.500-1s-9 1.800-13.500 1c-6-1-9.100-7-7.500-12.500 1.500-5 7.500-7.500 10.500-11.500 3-4 6-7.500 10.500-7.500z"/>
</g>
</svg>
<span class="t" style="left:837.500px;top:481.500px;font-size:24px;font-weight:bold;color:#1f1f1f;transform:scaleX(1.02);letter-spacing:-.5px">du</span>

<span class="t" style="left:766.6px;top:472.8px;font-size:39px;color:#fff;transform:scaleX(1.005);font-weight:bold;opacity:.66;-webkit-text-stroke:.9px #fff">Bai</span>
<span class="t" style="left:882.5px;top:476.5px;font-size:30px;color:#fff;transform:scaleX(1.000);font-weight:900;opacity:.66">经验</span>
<span class="t" style="left:767.0px;top:512.0px;font-size:20px;color:#fff;transform:scaleX(1.101);opacity:.68;-webkit-text-stroke:.3px #fff">jingyan.baidu.com</span>

</body>
</html>
